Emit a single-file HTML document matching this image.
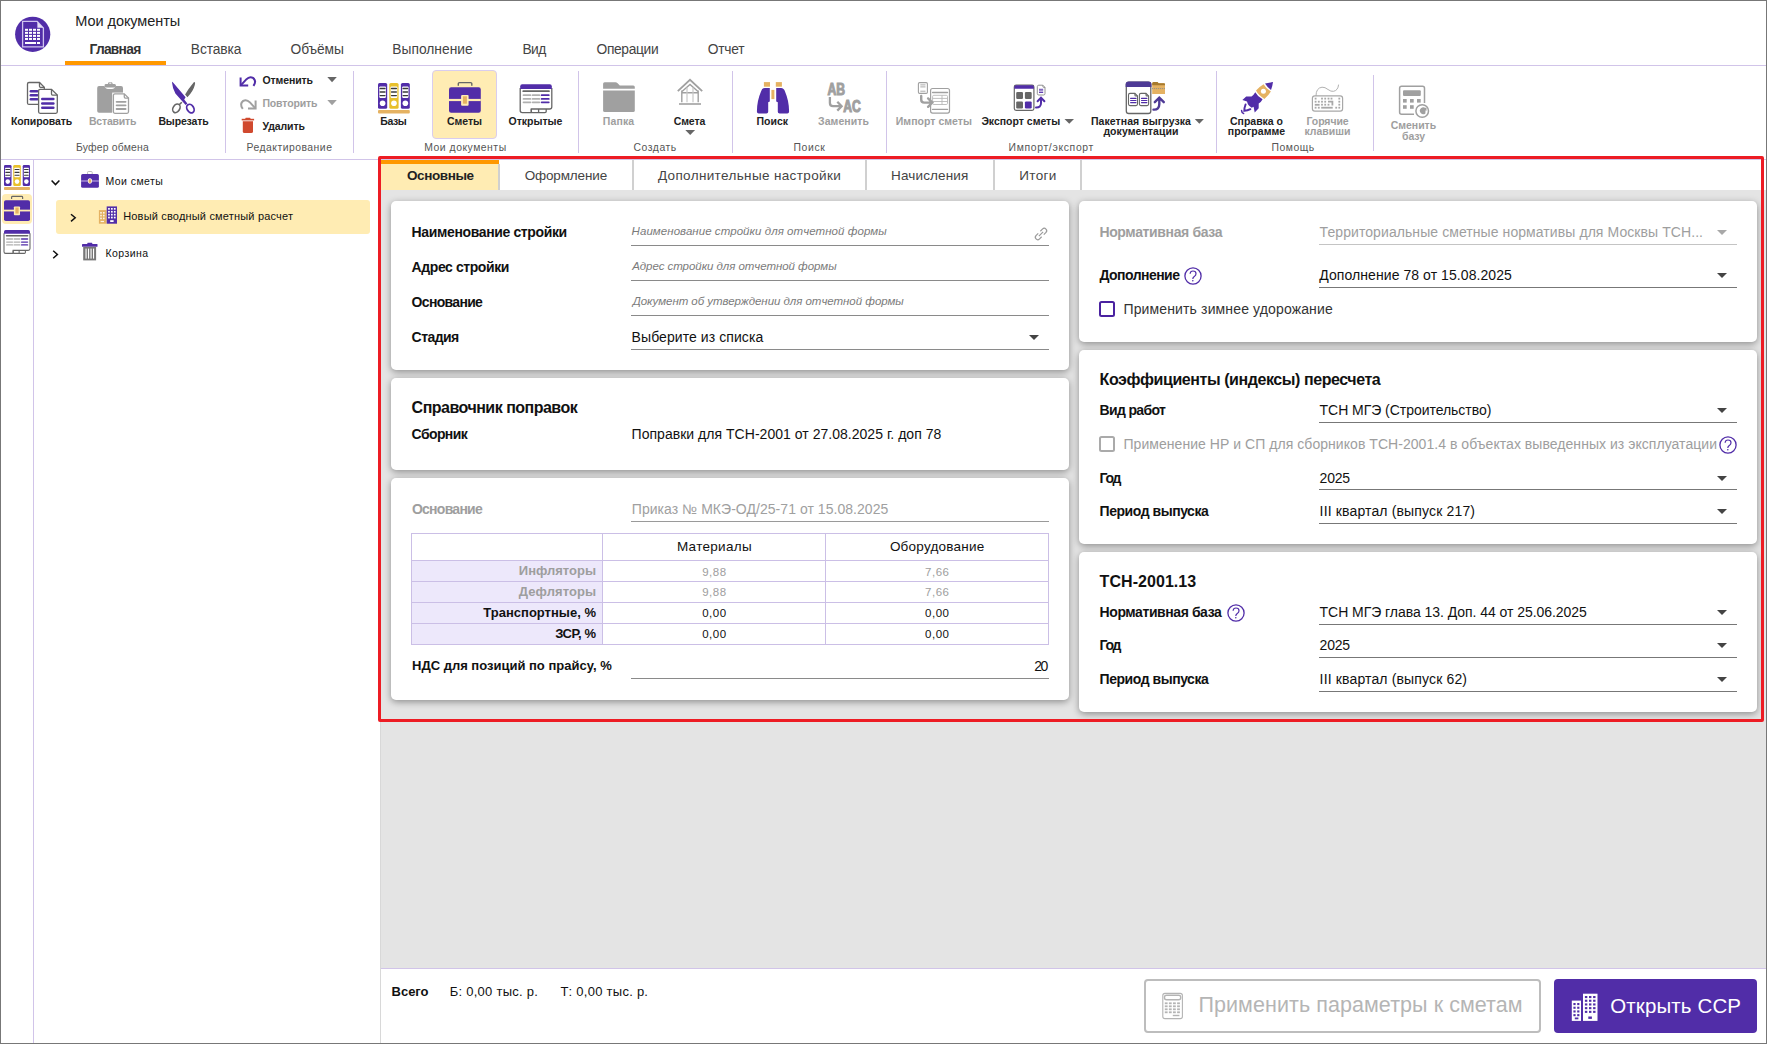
<!DOCTYPE html>
<html><head><meta charset="utf-8"><style>
html,body{margin:0;padding:0;}
body{width:1767px;height:1044px;overflow:hidden;position:relative;background:#fff;font-family:"Liberation Sans",sans-serif;}
.t{position:absolute;white-space:nowrap;line-height:1;}
svg{display:block;overflow:visible}
</style></head><body>
<div style="position:absolute;left:381px;top:160px;width:1385px;height:808px;background:#e4e4e4"></div><div class="t" style="left:75.30px;top:13.83px;font-size:14.5px;font-weight:400;color:#222;letter-spacing:-0.062px;">Мои документы</div><div class="t" style="left:89.50px;top:42.72px;font-size:13.8px;font-weight:700;color:#333;letter-spacing:-0.733px;">Главная</div><div class="t" style="left:190.80px;top:42.72px;font-size:13.8px;font-weight:400;color:#444;letter-spacing:-0.100px;">Вставка</div><div class="t" style="left:290.60px;top:42.72px;font-size:13.8px;font-weight:400;color:#444;letter-spacing:-0.120px;">Объёмы</div><div class="t" style="left:392.30px;top:42.72px;font-size:13.8px;font-weight:400;color:#444;letter-spacing:0.011px;">Выполнение</div><div class="t" style="left:522.50px;top:42.72px;font-size:13.8px;font-weight:400;color:#444;letter-spacing:-0.625px;">Вид</div><div class="t" style="left:596.50px;top:42.72px;font-size:13.8px;font-weight:400;color:#444;letter-spacing:-0.336px;">Операции</div><div class="t" style="left:707.80px;top:42.72px;font-size:13.8px;font-weight:400;color:#444;letter-spacing:-0.250px;">Отчет</div><div style="position:absolute;left:65px;top:61px;width:101px;height:4px;background:#ff9800"></div><div style="position:absolute;left:1px;top:65px;width:1765px;height:1px;background:#d1c4e9"></div><div style="position:absolute;left:1px;top:159px;width:1765px;height:1px;background:#d1c4e9"></div><div style="position:absolute;left:225px;top:71px;width:1px;height:82px;background:#d1c4e9"></div><div style="position:absolute;left:353px;top:71px;width:1px;height:82px;background:#d1c4e9"></div><div style="position:absolute;left:578px;top:71px;width:1px;height:82px;background:#d1c4e9"></div><div style="position:absolute;left:732px;top:71px;width:1px;height:82px;background:#d1c4e9"></div><div style="position:absolute;left:886px;top:71px;width:1px;height:82px;background:#d1c4e9"></div><div style="position:absolute;left:1216px;top:71px;width:1px;height:82px;background:#d1c4e9"></div><div style="position:absolute;left:1373px;top:75px;width:1px;height:76px;background:#d1c4e9"></div><div style="position:absolute;left:432px;top:70px;width:65px;height:69px;background:#ffecb3;border:1px solid #d9cdee;border-radius:4px;box-sizing:border-box"></div><div class="t" style="left:11.00px;top:115.81px;font-size:10.5px;font-weight:700;color:#222;letter-spacing:-0.111px;">Копировать</div><div class="t" style="left:89.00px;top:115.81px;font-size:10.5px;font-weight:700;color:#9e9e9e;letter-spacing:-0.214px;">Вставить</div><div class="t" style="left:158.40px;top:115.81px;font-size:10.5px;font-weight:700;color:#222;letter-spacing:-0.157px;">Вырезать</div><div class="t" style="left:262.40px;top:75.21px;font-size:10.5px;font-weight:700;color:#222;letter-spacing:-0.100px;">Отменить</div><div class="t" style="left:262.40px;top:98.31px;font-size:10.5px;font-weight:700;color:#9e9e9e;letter-spacing:-0.131px;">Повторить</div><div class="t" style="left:262.40px;top:120.71px;font-size:10.5px;font-weight:700;color:#222;letter-spacing:-0.083px;">Удалить</div><div class="t" style="left:380.30px;top:115.51px;font-size:10.5px;font-weight:700;color:#222;letter-spacing:-0.400px;">Базы</div><div class="t" style="left:447.00px;top:115.51px;font-size:10.5px;font-weight:700;color:#222;letter-spacing:-0.037px;">Сметы</div><div class="t" style="left:508.60px;top:115.51px;font-size:10.5px;font-weight:700;color:#222;letter-spacing:-0.029px;">Открытые</div><div class="t" style="left:602.70px;top:115.51px;font-size:10.5px;font-weight:700;color:#9e9e9e;letter-spacing:0.162px;">Папка</div><div class="t" style="left:673.70px;top:115.51px;font-size:10.5px;font-weight:700;color:#222;letter-spacing:-0.088px;">Смета</div><div class="t" style="left:756.50px;top:115.51px;font-size:10.5px;font-weight:700;color:#222;letter-spacing:-0.013px;">Поиск</div><div class="t" style="left:818.00px;top:115.51px;font-size:10.5px;font-weight:700;color:#9e9e9e;letter-spacing:0.086px;">Заменить</div><div class="t" style="left:895.80px;top:115.51px;font-size:10.5px;font-weight:700;color:#9e9e9e;letter-spacing:0.027px;">Импорт сметы</div><div class="t" style="left:981.40px;top:115.51px;font-size:10.5px;font-weight:700;color:#222;letter-spacing:-0.012px;">Экспорт сметы</div><div class="t" style="left:1090.90px;top:115.51px;font-size:10.5px;font-weight:700;color:#222;letter-spacing:0.075px;">Пакетная выгрузка</div><div class="t" style="left:1103.40px;top:126.41px;font-size:10.5px;font-weight:700;color:#222;letter-spacing:0.068px;">документации</div><div class="t" style="left:1230.00px;top:115.51px;font-size:10.5px;font-weight:700;color:#222;letter-spacing:-0.006px;">Справка о</div><div class="t" style="left:1227.80px;top:126.41px;font-size:10.5px;font-weight:700;color:#222;letter-spacing:0.006px;">программе</div><div class="t" style="left:1306.50px;top:115.51px;font-size:10.5px;font-weight:700;color:#9e9e9e;letter-spacing:-0.092px;">Горячие</div><div class="t" style="left:1304.40px;top:126.41px;font-size:10.5px;font-weight:700;color:#9e9e9e;">клавиши</div><div class="t" style="left:1390.70px;top:120.11px;font-size:10.5px;font-weight:700;color:#9e9e9e;letter-spacing:-0.017px;">Сменить</div><div class="t" style="left:1402.00px;top:130.51px;font-size:10.5px;font-weight:700;color:#9e9e9e;letter-spacing:-0.083px;">базу</div><div class="t" style="left:76.00px;top:142.50px;font-size:10.4px;font-weight:400;color:#555;letter-spacing:0.191px;">Буфер обмена</div><div class="t" style="left:246.50px;top:142.50px;font-size:10.4px;font-weight:400;color:#555;letter-spacing:0.481px;">Редактирование</div><div class="t" style="left:424.30px;top:142.50px;font-size:10.4px;font-weight:400;color:#555;letter-spacing:0.508px;">Мои документы</div><div class="t" style="left:633.50px;top:142.50px;font-size:10.4px;font-weight:400;color:#555;letter-spacing:0.542px;">Создать</div><div class="t" style="left:793.50px;top:142.50px;font-size:10.4px;font-weight:400;color:#555;letter-spacing:0.650px;">Поиск</div><div class="t" style="left:1008.50px;top:142.50px;font-size:10.4px;font-weight:400;color:#555;letter-spacing:0.673px;">Импорт/экспорт</div><div class="t" style="left:1271.50px;top:142.50px;font-size:10.4px;font-weight:400;color:#555;letter-spacing:0.530px;">Помощь</div><div style="position:absolute;left:33px;top:160px;width:1px;height:883px;background:#d1c4e9"></div><div style="position:absolute;left:380px;top:160px;width:1px;height:883px;background:#d8d8d8"></div><div style="position:absolute;left:2px;top:194px;width:30px;height:30px;background:#ffecb3;border-radius:4px"></div><div style="position:absolute;left:56px;top:200px;width:314px;height:34px;background:#ffecb3;border-radius:3px"></div><div class="t" style="left:105.40px;top:176.31px;font-size:10.5px;font-weight:400;color:#111;letter-spacing:0.450px;">Мои сметы</div><div class="t" style="left:123.20px;top:211.29px;font-size:11px;font-weight:400;color:#111;letter-spacing:0.181px;">Новый сводный сметный расчет</div><div class="t" style="left:105.40px;top:248.21px;font-size:10.5px;font-weight:400;color:#111;letter-spacing:0.450px;">Корзина</div><div style="position:absolute;left:381px;top:160px;width:1385px;height:30px;background:#fff"></div><div style="position:absolute;left:381px;top:160px;width:117px;height:30px;background:#ffecb3"></div><div style="position:absolute;left:381px;top:160px;width:118px;height:4px;background:#ff9800"></div><div style="position:absolute;left:498px;top:164px;width:2px;height:26px;background:#d0d0d0"></div><div style="position:absolute;left:632px;top:160px;width:2px;height:30px;background:#d0d0d0"></div><div style="position:absolute;left:865px;top:160px;width:2px;height:30px;background:#d0d0d0"></div><div style="position:absolute;left:993px;top:160px;width:2px;height:30px;background:#d0d0d0"></div><div style="position:absolute;left:1080px;top:160px;width:2px;height:30px;background:#d0d0d0"></div><div class="t" style="left:406.90px;top:168.97px;font-size:13.5px;font-weight:700;color:#222;letter-spacing:-0.386px;">Основные</div><div class="t" style="left:524.70px;top:168.97px;font-size:13.5px;font-weight:400;color:#444;letter-spacing:-0.144px;">Оформление</div><div class="t" style="left:657.90px;top:168.97px;font-size:13.5px;font-weight:400;color:#444;letter-spacing:0.361px;">Дополнительные настройки</div><div class="t" style="left:891.00px;top:168.97px;font-size:13.5px;font-weight:400;color:#444;letter-spacing:0.156px;">Начисления</div><div class="t" style="left:1019.30px;top:168.97px;font-size:13.5px;font-weight:400;color:#444;letter-spacing:0.350px;">Итоги</div><div style="position:absolute;left:391px;top:201px;width:678px;height:169px;box-shadow:0 2px 7px rgba(0,0,0,0.38);border-radius:5px;background:#fff"></div><div style="position:absolute;left:391px;top:378px;width:678px;height:92px;box-shadow:0 2px 7px rgba(0,0,0,0.38);border-radius:5px;background:#fff"></div><div style="position:absolute;left:391px;top:478px;width:678px;height:222px;box-shadow:0 2px 7px rgba(0,0,0,0.38);border-radius:5px;background:#fff"></div><div style="position:absolute;left:1079px;top:201px;width:678px;height:141px;box-shadow:0 2px 7px rgba(0,0,0,0.38);border-radius:5px;background:#fff"></div><div style="position:absolute;left:1079px;top:350px;width:678px;height:194px;box-shadow:0 2px 7px rgba(0,0,0,0.38);border-radius:5px;background:#fff"></div><div style="position:absolute;left:1079px;top:552px;width:678px;height:160px;box-shadow:0 2px 7px rgba(0,0,0,0.38);border-radius:5px;background:#fff"></div><div class="t" style="left:411.60px;top:225.15px;font-size:14px;font-weight:700;color:#111;letter-spacing:-0.366px;">Наименование стройки</div><div class="t" style="left:631.60px;top:226.27px;font-size:11.5px;font-weight:400;color:#7b7b7b;font-style:italic;letter-spacing:0.055px;">Наименование стройки для отчетной формы</div><div style="position:absolute;left:631px;top:245px;width:418px;height:1px;background:#8a8a8a"></div><div class="t" style="left:411.60px;top:259.95px;font-size:14px;font-weight:700;color:#111;letter-spacing:-0.417px;">Адрес стройки</div><div class="t" style="left:632.20px;top:261.27px;font-size:11.5px;font-weight:400;color:#7b7b7b;font-style:italic;letter-spacing:-0.053px;">Адрес стройки для отчетной формы</div><div style="position:absolute;left:631px;top:280px;width:418px;height:1px;background:#8a8a8a"></div><div class="t" style="left:411.60px;top:294.75px;font-size:14px;font-weight:700;color:#111;letter-spacing:-0.681px;">Основание</div><div class="t" style="left:632.70px;top:296.27px;font-size:11.5px;font-weight:400;color:#7b7b7b;font-style:italic;letter-spacing:-0.043px;">Документ об утверждении для отчетной формы</div><div style="position:absolute;left:631px;top:315px;width:418px;height:1px;background:#8a8a8a"></div><div class="t" style="left:411.60px;top:329.75px;font-size:14px;font-weight:700;color:#111;letter-spacing:-0.560px;">Стадия</div><div class="t" style="left:631.60px;top:329.75px;font-size:14px;font-weight:400;color:#111;letter-spacing:0.074px;">Выберите из списка</div><div style="position:absolute;left:631px;top:349px;width:418px;height:1px;background:#8a8a8a"></div><svg style="position:absolute;left:1029.3px;top:334.6px" width="10" height="5" viewBox="0 0 10 5"><path d="M0 0H10L5.0 5Z" fill="#444"/></svg><div class="t" style="left:411.60px;top:399.66px;font-size:16px;font-weight:700;color:#111;letter-spacing:-0.508px;">Справочник поправок</div><div class="t" style="left:411.60px;top:427.45px;font-size:14px;font-weight:700;color:#111;letter-spacing:-0.600px;">Сборник</div><div class="t" style="left:631.60px;top:427.45px;font-size:14px;font-weight:400;color:#111;letter-spacing:0.028px;">Поправки для ТСН-2001 от 27.08.2025 г. доп 78</div><div class="t" style="left:411.90px;top:502.15px;font-size:14px;font-weight:700;color:#9e9e9e;letter-spacing:-0.731px;">Основание</div><div class="t" style="left:631.80px;top:502.15px;font-size:14px;font-weight:400;color:#a0a0a0;letter-spacing:0.044px;">Приказ № МКЭ-ОД/25-71 от 15.08.2025</div><div style="position:absolute;left:631px;top:521px;width:418px;height:1px;background:#9a9a9a"></div><div style="position:absolute;left:411px;top:533px;width:638px;height:112px;border:1px solid #cbbfe6;box-sizing:border-box"></div><div style="position:absolute;left:412px;top:561px;width:190px;height:83px;background:#ede8fb"></div><div style="position:absolute;left:411px;top:560px;width:638px;height:1px;background:#cbbfe6"></div><div style="position:absolute;left:411px;top:581px;width:638px;height:1px;background:#cbbfe6"></div><div style="position:absolute;left:411px;top:602px;width:638px;height:1px;background:#cbbfe6"></div><div style="position:absolute;left:411px;top:623px;width:638px;height:1px;background:#cbbfe6"></div><div style="position:absolute;left:602px;top:533px;width:1px;height:112px;background:#cbbfe6"></div><div style="position:absolute;left:825px;top:533px;width:1px;height:112px;background:#cbbfe6"></div><div class="t" style="left:676.90px;top:539.67px;font-size:13.5px;font-weight:400;color:#111;letter-spacing:0.313px;">Материалы</div><div class="t" style="left:889.90px;top:539.67px;font-size:13.5px;font-weight:400;color:#111;letter-spacing:0.227px;">Оборудование</div><div class="t" style="left:518.80px;top:563.60px;font-size:13px;font-weight:700;color:#9e9e9e;letter-spacing:-0.006px;">Инфляторы</div><div class="t" style="left:702.20px;top:566.57px;font-size:11.5px;font-weight:400;color:#9e9e9e;letter-spacing:0.533px;">9,88</div><div class="t" style="left:925.10px;top:566.57px;font-size:11.5px;font-weight:400;color:#9e9e9e;letter-spacing:0.500px;">7,66</div><div class="t" style="left:518.80px;top:584.60px;font-size:13px;font-weight:700;color:#9e9e9e;letter-spacing:0.063px;">Дефляторы</div><div class="t" style="left:702.20px;top:587.47px;font-size:11.5px;font-weight:400;color:#9e9e9e;letter-spacing:0.533px;">9,88</div><div class="t" style="left:925.10px;top:587.47px;font-size:11.5px;font-weight:400;color:#9e9e9e;letter-spacing:0.500px;">7,66</div><div class="t" style="left:483.30px;top:605.60px;font-size:13px;font-weight:700;color:#111;letter-spacing:0.007px;">Транспортные, %</div><div class="t" style="left:702.20px;top:608.47px;font-size:11.5px;font-weight:400;color:#111;letter-spacing:0.533px;">0,00</div><div class="t" style="left:925.10px;top:608.47px;font-size:11.5px;font-weight:400;color:#111;letter-spacing:0.500px;">0,00</div><div class="t" style="left:555.20px;top:626.60px;font-size:13px;font-weight:700;color:#111;letter-spacing:-0.410px;">ЗСР, %</div><div class="t" style="left:702.20px;top:629.17px;font-size:11.5px;font-weight:400;color:#111;letter-spacing:0.533px;">0,00</div><div class="t" style="left:925.10px;top:629.17px;font-size:11.5px;font-weight:400;color:#111;letter-spacing:0.500px;">0,00</div><div class="t" style="left:412.00px;top:659.20px;font-size:13px;font-weight:700;color:#111;">НДС для позиций по прайсу, %</div><div class="t" style="left:1034.20px;top:658.95px;font-size:14px;font-weight:400;color:#111;letter-spacing:-1.350px;">20</div><div style="position:absolute;left:631px;top:678px;width:418px;height:1px;background:#8a8a8a"></div><div class="t" style="left:1099.40px;top:225.35px;font-size:14px;font-weight:700;color:#9e9e9e;letter-spacing:-0.363px;">Нормативная база</div><div class="t" style="left:1319.60px;top:225.35px;font-size:14px;font-weight:400;color:#9e9e9e;letter-spacing:0.077px;">Территориальные сметные нормативы для Москвы ТСН...</div><svg style="position:absolute;left:1717.3px;top:229.5px" width="10" height="5" viewBox="0 0 10 5"><path d="M0 0H10L5.0 5Z" fill="#a8a8a8"/></svg><div style="position:absolute;left:1319px;top:244px;width:418px;height:1px;background:#c4c4c4"></div><div class="t" style="left:1099.40px;top:267.95px;font-size:14px;font-weight:700;color:#111;letter-spacing:-0.528px;">Дополнение</div><div class="t" style="left:1319.30px;top:267.95px;font-size:14px;font-weight:400;color:#111;letter-spacing:0.069px;">Дополнение 78 от 15.08.2025</div><svg style="position:absolute;left:1717.3px;top:273px" width="10" height="5" viewBox="0 0 10 5"><path d="M0 0H10L5.0 5Z" fill="#444"/></svg><div style="position:absolute;left:1319px;top:287px;width:418px;height:1px;background:#777"></div><div style="position:absolute;left:1099px;top:300.8px;width:16px;height:16px;border:2px solid #4a22a0;box-sizing:border-box;border-radius:2.5px"></div><div class="t" style="left:1123.50px;top:302.15px;font-size:14px;font-weight:400;color:#333;letter-spacing:0.135px;">Применить зимнее удорожание</div><div class="t" style="left:1099.60px;top:371.76px;font-size:16px;font-weight:700;color:#111;letter-spacing:-0.429px;">Коэффициенты (индексы) пересчета</div><div class="t" style="left:1099.60px;top:403.15px;font-size:14px;font-weight:700;color:#111;letter-spacing:-0.656px;">Вид работ</div><div class="t" style="left:1319.60px;top:403.15px;font-size:14px;font-weight:400;color:#111;letter-spacing:-0.041px;">ТСН МГЭ (Строительство)</div><svg style="position:absolute;left:1717.3px;top:408px" width="10" height="5" viewBox="0 0 10 5"><path d="M0 0H10L5.0 5Z" fill="#444"/></svg><div style="position:absolute;left:1319px;top:422px;width:418px;height:1px;background:#777"></div><div style="position:absolute;left:1099px;top:435.9px;width:16px;height:16px;border:2px solid #aaaaaa;box-sizing:border-box;border-radius:2.5px"></div><div class="t" style="left:1123.50px;top:436.95px;font-size:14px;font-weight:400;color:#9e9e9e;letter-spacing:0.046px;">Применение НР и СП для сборников ТСН-2001.4 в объектах выведенных из эксплуатации</div><div class="t" style="left:1099.60px;top:470.95px;font-size:14px;font-weight:700;color:#111;letter-spacing:-1.400px;">Год</div><div class="t" style="left:1319.60px;top:470.95px;font-size:14px;font-weight:400;color:#111;letter-spacing:-0.217px;">2025</div><svg style="position:absolute;left:1717.3px;top:476px" width="10" height="5" viewBox="0 0 10 5"><path d="M0 0H10L5.0 5Z" fill="#444"/></svg><div style="position:absolute;left:1319px;top:489px;width:418px;height:1px;background:#777"></div><div class="t" style="left:1099.60px;top:503.65px;font-size:14px;font-weight:700;color:#111;letter-spacing:-0.462px;">Период выпуска</div><div class="t" style="left:1319.60px;top:503.65px;font-size:14px;font-weight:400;color:#111;letter-spacing:0.150px;">III квартал (выпуск 217)</div><svg style="position:absolute;left:1717.3px;top:509.2px" width="10" height="5" viewBox="0 0 10 5"><path d="M0 0H10L5.0 5Z" fill="#444"/></svg><div style="position:absolute;left:1319px;top:523px;width:418px;height:1px;background:#777"></div><div class="t" style="left:1099.60px;top:573.76px;font-size:16px;font-weight:700;color:#111;letter-spacing:0.055px;">ТСН-2001.13</div><div class="t" style="left:1099.60px;top:605.15px;font-size:14px;font-weight:700;color:#111;letter-spacing:-0.423px;">Нормативная база</div><div class="t" style="left:1319.60px;top:605.15px;font-size:14px;font-weight:400;color:#111;letter-spacing:-0.047px;">ТСН МГЭ глава 13. Доп. 44 от 25.06.2025</div><svg style="position:absolute;left:1717.3px;top:610px" width="10" height="5" viewBox="0 0 10 5"><path d="M0 0H10L5.0 5Z" fill="#444"/></svg><div style="position:absolute;left:1319px;top:624px;width:418px;height:1px;background:#777"></div><div class="t" style="left:1099.60px;top:637.85px;font-size:14px;font-weight:700;color:#111;letter-spacing:-1.400px;">Год</div><div class="t" style="left:1319.60px;top:637.85px;font-size:14px;font-weight:400;color:#111;letter-spacing:-0.217px;">2025</div><svg style="position:absolute;left:1717.3px;top:642.5px" width="10" height="5" viewBox="0 0 10 5"><path d="M0 0H10L5.0 5Z" fill="#444"/></svg><div style="position:absolute;left:1319px;top:657px;width:418px;height:1px;background:#777"></div><div class="t" style="left:1099.60px;top:672.15px;font-size:14px;font-weight:700;color:#111;letter-spacing:-0.462px;">Период выпуска</div><div class="t" style="left:1319.60px;top:672.15px;font-size:14px;font-weight:400;color:#111;letter-spacing:0.148px;">III квартал (выпуск 62)</div><svg style="position:absolute;left:1717.3px;top:677px" width="10" height="5" viewBox="0 0 10 5"><path d="M0 0H10L5.0 5Z" fill="#444"/></svg><div style="position:absolute;left:1319px;top:691px;width:418px;height:1px;background:#777"></div><svg style="position:absolute;left:1184px;top:267px" width="18" height="18" viewBox="0 0 18 18"><circle cx="9" cy="9" r="8.1" fill="none" stroke="#512da8" stroke-width="1.3"/><path d="M6.1 6.8Q6.3 4 9 4Q12 4 12 6.7Q12 8.4 10.3 9.4Q8.8 10.3 8.8 12.1" fill="none" stroke="#512da8" stroke-width="1.2"/><circle cx="8.8" cy="13.7" r="0.8" fill="#512da8"/></svg><svg style="position:absolute;left:1719px;top:435.8px" width="18" height="18" viewBox="0 0 18 18"><circle cx="9" cy="9" r="8.1" fill="none" stroke="#512da8" stroke-width="1.3"/><path d="M6.1 6.8Q6.3 4 9 4Q12 4 12 6.7Q12 8.4 10.3 9.4Q8.8 10.3 8.8 12.1" fill="none" stroke="#512da8" stroke-width="1.2"/><circle cx="8.8" cy="13.7" r="0.8" fill="#512da8"/></svg><svg style="position:absolute;left:1227px;top:604px" width="18" height="18" viewBox="0 0 18 18"><circle cx="9" cy="9" r="8.1" fill="none" stroke="#512da8" stroke-width="1.3"/><path d="M6.1 6.8Q6.3 4 9 4Q12 4 12 6.7Q12 8.4 10.3 9.4Q8.8 10.3 8.8 12.1" fill="none" stroke="#512da8" stroke-width="1.2"/><circle cx="8.8" cy="13.7" r="0.8" fill="#512da8"/></svg><div style="position:absolute;left:378px;top:156px;width:1386px;height:566px;border:3px solid #ed1c24;box-sizing:border-box;border-radius:2px"></div><div style="position:absolute;left:381px;top:968px;width:1385px;height:75px;background:#fff"></div><div style="position:absolute;left:381px;top:968px;width:1385px;height:1px;background:#d1c4e9"></div><div class="t" style="left:391.60px;top:984.70px;font-size:13px;font-weight:700;color:#111;letter-spacing:-0.037px;">Всего</div><div class="t" style="left:449.70px;top:984.70px;font-size:13px;font-weight:400;color:#111;letter-spacing:0.268px;">Б: 0,00 тыс. р.</div><div class="t" style="left:560.40px;top:984.70px;font-size:13px;font-weight:400;color:#111;letter-spacing:0.261px;">Т: 0,00 тыс. р.</div><div style="position:absolute;left:1144px;top:979px;width:397px;height:54px;border:2px solid #bdbdbd;box-sizing:border-box;border-radius:4px;background:#fff"></div><div class="t" style="left:1198.50px;top:994.90px;font-size:21.5px;font-weight:400;color:#b5b5b5;letter-spacing:0.065px;">Применить параметры к сметам</div><div style="position:absolute;left:1554px;top:979px;width:203px;height:54px;background:#512da8;border-radius:4px"></div><div class="t" style="left:1610.30px;top:995.65px;font-size:20.5px;font-weight:400;color:#fff;letter-spacing:0.120px;">Открыть ССР</div><div style="position:absolute;left:0px;top:0px;width:1767px;height:1px;background:#777"></div><div style="position:absolute;left:0px;top:1043px;width:1767px;height:1px;background:#777"></div><div style="position:absolute;left:0px;top:0px;width:1px;height:1044px;background:#777"></div><div style="position:absolute;left:1766px;top:0px;width:1px;height:1044px;background:#777"></div><svg style="position:absolute;left:0;top:0" width="1767" height="1044" viewBox="0 0 1767 1044"><circle cx="32.7" cy="34.3" r="17.6" fill="#512da8"/><path d="M22.6 21.4H37.199999999999996L43.4 28.0V46.9H22.6Z" fill="none" stroke="#cfc3ee" stroke-width="1.3"/><path d="M37.4 21.799999999999997V27.799999999999997H43.1Z" fill="#e6dff7"/><rect x="25.0" y="28.8" width="3.0" height="2.0" fill="#fff"/><rect x="29.0" y="28.8" width="3.0" height="2.0" fill="#fff"/><rect x="33.0" y="28.8" width="3.0" height="2.0" fill="#fff"/><rect x="37.0" y="28.8" width="3.0" height="2.0" fill="#fff"/><rect x="25.0" y="31.85" width="3.0" height="2.0" fill="#fff"/><rect x="29.0" y="31.85" width="3.0" height="2.0" fill="#fff"/><rect x="33.0" y="31.85" width="3.0" height="2.0" fill="#fff"/><rect x="37.0" y="31.85" width="3.0" height="2.0" fill="#fff"/><rect x="25.0" y="34.9" width="3.0" height="2.0" fill="#fff"/><rect x="29.0" y="34.9" width="3.0" height="2.0" fill="#fff"/><rect x="33.0" y="34.9" width="3.0" height="2.0" fill="#fff"/><rect x="37.0" y="34.9" width="3.0" height="2.0" fill="#fff"/><rect x="25.0" y="37.95" width="3.0" height="2.0" fill="#fff"/><rect x="29.0" y="37.95" width="3.0" height="2.0" fill="#fff"/><rect x="33.0" y="37.95" width="3.0" height="2.0" fill="#fff"/><rect x="37.0" y="37.95" width="3.0" height="2.0" fill="#fff"/><rect x="25.0" y="42.0" width="11.0" height="2.0" fill="#fff"/><rect x="37.0" y="42.0" width="3.0" height="2.0" fill="#fff"/><path d="M29.0 82.5H39.5L44.3 87.3V102.9Q44.3 104.4 42.8 104.4H29.0Q27.5 104.4 27.5 102.9V84.0Q27.5 82.5 29.0 82.5Z" fill="#fff" stroke="#666666" stroke-width="1.3"/><path d="M39.5 82.5V86.3Q39.5 87.3 40.5 87.3H44.3" fill="none" stroke="#666666" stroke-width="1.3"/><line x1="30.8" y1="91.3" x2="37.2" y2="91.3" stroke="#512da8" stroke-width="2.4" stroke-linecap="round"/><line x1="30.8" y1="95.3" x2="37.2" y2="95.3" stroke="#512da8" stroke-width="2.4" stroke-linecap="round"/><line x1="30.8" y1="99.2" x2="37.2" y2="99.2" stroke="#512da8" stroke-width="2.4" stroke-linecap="round"/><path d="M40.1 89.3H51.5L57.3 95.1V111.8Q57.3 113.3 55.8 113.3H40.1Q38.6 113.3 38.6 111.8V90.8Q38.6 89.3 40.1 89.3Z" fill="#fff" stroke="#666666" stroke-width="1.3"/><path d="M51.5 89.3V94.1Q51.5 95.1 52.5 95.1H57.3" fill="none" stroke="#666666" stroke-width="1.3"/><line x1="42.2" y1="99.0" x2="53.4" y2="99.0" stroke="#512da8" stroke-width="2.4" stroke-linecap="round"/><line x1="42.2" y1="103.5" x2="53.4" y2="103.5" stroke="#512da8" stroke-width="2.4" stroke-linecap="round"/><line x1="42.2" y1="107.8" x2="53.4" y2="107.8" stroke="#512da8" stroke-width="2.4" stroke-linecap="round"/><path d="M99 86H104.5Q105.5 89 108 89H112Q114.5 89 115.5 86H121Q123 86 123 88V112.8H99Q97.2 112.8 97.2 111V88Q97.2 86 99 86Z" fill="#a0a0a0"/><path d="M104.6 85Q104.6 84 106 84H107.8L108.6 82.2H112L112.8 84H114.5Q116 84 116 85.5Q116 87.6 114 87.6H106.5Q104.6 87.6 104.6 86Z" fill="#a0a0a0"/><rect x="109.3" y="82.8" width="2" height="0.9" fill="#fff"/><rect x="112.2" y="92.6" width="18" height="22" fill="#fff"/><path d="M114.9 93.9H124.3L128.5 98.10000000000001V111.8Q128.5 113.3 127.0 113.3H114.9Q113.4 113.3 113.4 111.8V95.4Q113.4 93.9 114.9 93.9Z" fill="#fff" stroke="#a0a0a0" stroke-width="1.3"/><path d="M124.3 93.9V97.10000000000001Q124.3 98.10000000000001 125.3 98.10000000000001H128.5" fill="none" stroke="#a0a0a0" stroke-width="1.3"/><line x1="116.6" y1="101.8" x2="125.6" y2="101.8" stroke="#a0a0a0" stroke-width="1.8" stroke-linecap="round"/><line x1="116.6" y1="105.3" x2="125.6" y2="105.3" stroke="#a0a0a0" stroke-width="1.8" stroke-linecap="round"/><line x1="116.6" y1="109.0" x2="125.6" y2="109.0" stroke="#a0a0a0" stroke-width="1.8" stroke-linecap="round"/><path d="M172.4 81.8L185.6 97.3L184.2 99.6L187.4 103.6L185.6 104.9L181.6 100.4L175.4 93.4Q172.4 88 172.1 83Q172.1 81.8 172.4 81.8Z" fill="#512da8"/><ellipse cx="190.4" cy="108.6" rx="3.3" ry="4.6" transform="rotate(-32 190.4 108.6)" fill="none" stroke="#512da8" stroke-width="1.8"/><path d="M194.6 81.9Q195.6 82.4 194.8 85Q193.4 91 187.4 97.3L185.1 94.6Q188.5 88.5 193.8 82.2Z" fill="#666666"/><ellipse cx="176.4" cy="108.3" rx="3.3" ry="4.6" transform="rotate(32 176.4 108.3)" fill="none" stroke="#666666" stroke-width="1.6"/><line x1="179.2" y1="104.8" x2="181.8" y2="102.2" stroke="#666666" stroke-width="1.6"/><path d="M240.6 77.6V85.6H248.2" fill="none" stroke="#512da8" stroke-width="2"/><path d="M241 85.2L246.3 79.4Q249.6 75.9 253 77.9Q257 81 253.4 85.9" fill="none" stroke="#512da8" stroke-width="2"/><path d="M255.6 100.6V108.6H248" fill="none" stroke="#a0a0a0" stroke-width="2"/><path d="M255.2 108.2L249.9 102.4Q246.6 98.9 243.2 100.9Q239.2 104 242.8 108.9" fill="none" stroke="#a0a0a0" stroke-width="2"/><rect x="241.7" y="118.8" width="12.4" height="1.6" fill="#d0492e"/><rect x="245.3" y="117.8" width="5.2" height="1.4" rx="0.6" fill="#d0492e"/><path d="M242.8 121.2H253V131.4Q253 133.1 251.3 133.1H244.5Q242.8 133.1 242.8 131.4Z" fill="#d0492e"/><rect x="378.0" y="83.0" width="9.199999999999989" height="25.8" rx="1.6" fill="#512da8"/><rect x="379.3" y="86.4" width="6.599999999999989" height="11.5" rx="0.8" fill="#fff"/><line x1="380.2" y1="88.5" x2="385.0" y2="88.5" stroke="#3a3a3a" stroke-width="1.3" stroke-linecap="round"/><line x1="380.2" y1="92.0" x2="385.0" y2="92.0" stroke="#3a3a3a" stroke-width="1.3" stroke-linecap="round"/><line x1="380.2" y1="95.6" x2="385.0" y2="95.6" stroke="#3a3a3a" stroke-width="1.3" stroke-linecap="round"/><circle cx="382.6" cy="103.3" r="2.8" fill="#fff"/><rect x="389.3" y="83.0" width="9.300000000000011" height="25.8" rx="1.6" fill="#e8c02c"/><rect x="390.6" y="86.4" width="6.700000000000012" height="11.5" rx="0.8" fill="#fff"/><line x1="391.5" y1="88.5" x2="396.40000000000003" y2="88.5" stroke="#3a3a3a" stroke-width="1.3" stroke-linecap="round"/><line x1="391.5" y1="92.0" x2="396.40000000000003" y2="92.0" stroke="#3a3a3a" stroke-width="1.3" stroke-linecap="round"/><line x1="391.5" y1="95.6" x2="396.40000000000003" y2="95.6" stroke="#3a3a3a" stroke-width="1.3" stroke-linecap="round"/><circle cx="393.95000000000005" cy="103.3" r="2.8" fill="#fff"/><rect x="400.9" y="83.0" width="8.900000000000034" height="25.8" rx="1.6" fill="#512da8"/><rect x="402.2" y="86.4" width="6.3000000000000345" height="11.5" rx="0.8" fill="#fff"/><line x1="403.09999999999997" y1="88.5" x2="407.6" y2="88.5" stroke="#3a3a3a" stroke-width="1.3" stroke-linecap="round"/><line x1="403.09999999999997" y1="92.0" x2="407.6" y2="92.0" stroke="#3a3a3a" stroke-width="1.3" stroke-linecap="round"/><line x1="403.09999999999997" y1="95.6" x2="407.6" y2="95.6" stroke="#3a3a3a" stroke-width="1.3" stroke-linecap="round"/><circle cx="405.35" cy="103.3" r="2.8" fill="#fff"/><rect x="378.0" y="110.0" width="31.8" height="3.6" rx="1.0" fill="#e5b262"/><path d="M458.3 85.8V83.6Q458.3 82.6 459.5 82.6H470.6Q471.8 82.6 471.8 83.6V85.8" fill="none" stroke="#666666" stroke-width="1.4"/><rect x="449.0" y="87.3" width="31.8" height="25.4" rx="2.2" fill="#512da8"/><rect x="449.0" y="98.9" width="31.8" height="2.2" fill="#ffecb3"/><rect x="461.1" y="95.1" width="7.5" height="10.7" rx="1.0" fill="#ffecb3"/><rect x="462.9" y="96.3" width="4.0" height="7.4" fill="#e5b262"/><path d="M520.2 88.0V110.6Q520.2 112.6 522.2 112.6H531.3V109.0H549.6Q551.8 109.0 551.8 106.8V88.0" fill="#fff" stroke="#666666" stroke-width="1.3"/><path d="M531.3 109.0V111.5Q531.3 112.6 532.4 112.6H545.0Q546.2 112.6 546.2 111.5V109.0M538.6 109.0V112.6" fill="none" stroke="#666666" stroke-width="1.3"/><path d="M520.2 88.9V86.2Q520.2 84.2 522.2 84.2H549.8Q551.8 84.2 551.8 86.2V88.9Z" fill="#512da8"/><line x1="523.2" y1="91.2" x2="549.0" y2="91.2" stroke="#666666" stroke-width="1.7" stroke-linecap="round"/><line x1="523.5" y1="95.2" x2="530.5" y2="95.2" stroke="#b0b0b0" stroke-width="1.7" stroke-linecap="round"/><line x1="532.6" y1="95.2" x2="539.4" y2="95.2" stroke="#b0b0b0" stroke-width="1.7" stroke-linecap="round"/><line x1="541.6" y1="95.2" x2="548.8" y2="95.2" stroke="#512da8" stroke-width="1.7" stroke-linecap="round"/><line x1="523.5" y1="98.9" x2="530.5" y2="98.9" stroke="#b0b0b0" stroke-width="1.7" stroke-linecap="round"/><line x1="532.6" y1="98.9" x2="539.4" y2="98.9" stroke="#b0b0b0" stroke-width="1.7" stroke-linecap="round"/><line x1="541.6" y1="98.9" x2="548.8" y2="98.9" stroke="#512da8" stroke-width="1.7" stroke-linecap="round"/><line x1="523.5" y1="102.3" x2="530.5" y2="102.3" stroke="#b0b0b0" stroke-width="1.7" stroke-linecap="round"/><line x1="532.6" y1="102.3" x2="539.4" y2="102.3" stroke="#b0b0b0" stroke-width="1.7" stroke-linecap="round"/><line x1="541.6" y1="102.3" x2="548.8" y2="102.3" stroke="#512da8" stroke-width="1.7" stroke-linecap="round"/><path d="M603.1 83.8Q603.1 82.3 604.6 82.3H615.5Q616.6 82.3 617.6 83.3L619.8 85.6H633.3Q634.8 85.6 634.8 87.1V88.7H603.1Z" fill="#a0a0a0"/><path d="M603.1 90.4H634.8V110.4Q634.8 112 633.2 112H604.7Q603.1 112 603.1 110.4Z" fill="#a0a0a0"/><path d="M677.8 91.2L690 79.8L702.2 91.2" fill="none" stroke="#a0a0a0" stroke-width="1.8"/><path d="M682 91.5L690 84.4L698 91.5" fill="none" stroke="#a0a0a0" stroke-width="1.4"/><path d="M681.8 90.5V102.2M698.2 90.5V102.2M681.8 92.8H698.2" fill="none" stroke="#a0a0a0" stroke-width="1.4"/><path d="M687 87.5V102.2M693 87.5V102.2" fill="none" stroke="#c8c8c8" stroke-width="1.2"/><path d="M679 104H701" fill="none" stroke="#a0a0a0" stroke-width="1.6"/><rect x="763.9" y="82.1" width="6.1" height="4.6" fill="#e5b262"/><rect x="775.8" y="82.1" width="6.1" height="4.6" fill="#e5b262"/><rect x="771.4" y="89.9" width="3" height="9.2" fill="#e5b262"/><path d="M765 88H769.8V101.4L768.2 102.2V111.8Q768.2 113.6 766.4 113.6H758.7Q756.9 113.6 756.9 111.6Q756.9 101 761 91.5Q762 88 765 88Z" fill="#512da8"/><path d="M781 88H776.2V101.4L777.8 102.2V111.8Q777.8 113.6 779.6 113.6H787.3Q789.1 113.6 789.1 111.6Q789.1 101 785 91.5Q784 88 781 88Z" fill="#512da8"/><text x="827.6" y="94.7" font-family="Liberation Sans" font-weight="700" font-size="15.6" fill="#a0a0a0" stroke="#a0a0a0" stroke-width="1.1" transform="translate(827.6 0) scale(0.78 1) translate(-827.6 0)">AB</text><text x="843.2" y="111.7" font-family="Liberation Sans" font-weight="700" font-size="15.6" fill="#a0a0a0" stroke="#a0a0a0" stroke-width="1.1" transform="translate(843.2 0) scale(0.78 1) translate(-843.2 0)">AC</text><path d="M829.9 97V103Q829.9 106.2 833 106.2H841.5M837.3 101.8L841.6 106.2L837.3 110.6" fill="none" stroke="#a0a0a0" stroke-width="2.3"/><rect x="918.4" y="82.6" width="9" height="10.8" rx="1.2" fill="#fff" stroke="#a0a0a0" stroke-width="1.1"/><path d="M920.3 84.9H925.5M920.3 86.9H925.5M920.3 91.2H925.5" stroke="#a0a0a0" stroke-width="0.9"/><rect x="930.6" y="88.5" width="18.9" height="24.6" rx="2" fill="#fff" stroke="#a0a0a0" stroke-width="1.2"/><path d="M932.6 92.5H947.5M932.6 109.4H947.5" stroke="#a0a0a0" stroke-width="1.4" stroke-linecap="round"/><rect x="932.6" y="95.3" width="14.9" height="9.2" rx="1.2" fill="none" stroke="#b8b8b8" stroke-width="0.9"/><path d="M932.6 98.4H947.5M932.6 101.5H947.5M942 95.3V104.5" stroke="#b8b8b8" stroke-width="0.9"/><rect x="925" y="96" width="9" height="14" fill="#fff" opacity="0"/><path d="M921.2 96V99.5Q921.2 102.6 924.3 102.6H932.3M928.1 98.4L932.3 102.6L928.1 106.8" fill="none" stroke="#a0a0a0" stroke-width="2.4" stroke-linecap="round"/><rect x="1014.3" y="85.2" width="19.6" height="25.2" rx="1.8" fill="#fff" stroke="#666666" stroke-width="1.2"/><path d="M1014.3 88.8V87Q1014.3 85.2 1016.1 85.2H1032.1Q1033.9 85.2 1033.9 87V88.8Z" fill="#512da8"/><rect x="1016.2" y="91.9" width="6.8" height="7.1" rx="1.2" fill="#666666"/><rect x="1024.9" y="91.9" width="6.8" height="7.1" rx="1.2" fill="#666666"/><rect x="1016.2" y="101.4" width="6.8" height="7.1" rx="1.2" fill="#666666"/><rect x="1024.9" y="101.4" width="6.8" height="7.1" rx="1.2" fill="#512da8"/><path d="M1038.8 85.2H1042.8L1045 87.4V93.5Q1045 95 1043.5 95H1038.8Q1037.3 95 1037.3 93.5V86.7Q1037.3 85.2 1038.8 85.2Z" fill="#fff" stroke="#888" stroke-width="0.9"/><path d="M1042.8 85.2V86.4Q1042.8 87.4 1043.8 87.4H1045" fill="none" stroke="#888" stroke-width="0.9"/><path d="M1039 89.3H1043.2M1039 90.9H1043.2M1039 92.5H1043.2" stroke="#512da8" stroke-width="0.9"/><path d="M1036 107.6Q1041 107.8 1041 103V98.2M1037.6 101.2L1041 97.6L1044.4 101.2" fill="none" stroke="#512da8" stroke-width="2" stroke-linecap="round"/><rect x="1126.3" y="82.1" width="24.5" height="31.4" rx="2.6" fill="#fff" stroke="#666666" stroke-width="1.3"/><path d="M1125.65 86.9V84.6Q1125.65 81.45 1128.8 81.45H1148.3Q1151.45 81.45 1151.45 84.6V86.9Z" fill="#4e3a96"/><path d="M1130.0 93.4H1134.9L1137.5 96.0V104.1Q1137.5 105.6 1136.0 105.6H1130.0Q1128.5 105.6 1128.5 104.1V94.9Q1128.5 93.4 1130.0 93.4Z" fill="#fff" stroke="#666666" stroke-width="1.1"/><path d="M1134.9 93.4V95.0Q1134.9 96.0 1135.9 96.0H1137.5" fill="none" stroke="#666666" stroke-width="1.1"/><path d="M1140.9 93.4H1146.0L1148.6 96.0V104.1Q1148.6 105.6 1147.1 105.6H1140.9Q1139.4 105.6 1139.4 104.1V94.9Q1139.4 93.4 1140.9 93.4Z" fill="#fff" stroke="#666666" stroke-width="1.1"/><path d="M1146.0 93.4V95.0Q1146.0 96.0 1147.0 96.0H1148.6" fill="none" stroke="#666666" stroke-width="1.1"/><line x1="1130.6" y1="98.4" x2="1136.0" y2="98.4" stroke="#512da8" stroke-width="1.1" stroke-linecap="round"/><line x1="1130.6" y1="100.5" x2="1136.0" y2="100.5" stroke="#512da8" stroke-width="1.1" stroke-linecap="round"/><line x1="1130.6" y1="102.6" x2="1136.0" y2="102.6" stroke="#512da8" stroke-width="1.1" stroke-linecap="round"/><line x1="1141.5" y1="98.4" x2="1146.9" y2="98.4" stroke="#512da8" stroke-width="1.1" stroke-linecap="round"/><line x1="1141.5" y1="100.5" x2="1146.9" y2="100.5" stroke="#512da8" stroke-width="1.1" stroke-linecap="round"/><line x1="1141.5" y1="102.6" x2="1146.9" y2="102.6" stroke="#512da8" stroke-width="1.1" stroke-linecap="round"/><path d="M1152.2 83.6Q1152.2 82 1153.6 82H1157.5L1158.6 83.2H1164Q1165 83.2 1165 84.2V93.9H1152.2Z" fill="#e5b262"/><path d="M1152.2 83.6Q1152.2 82 1153.6 82H1157.5L1158.6 83.2H1164Q1165 83.2 1165 84.2V85.3H1152.2Z" fill="#a67a2e"/><path d="M1152.2 88.6H1165" stroke="#8a8a8a" stroke-width="1" stroke-dasharray="1 1"/><path d="M1153.5 109.6Q1159.3 110 1159.3 104V98M1154.8 102.2L1159.3 97.6L1163.8 102.2" fill="none" stroke="#4e3a96" stroke-width="2.4" stroke-linecap="round"/><path d="M1273 82.1L1265 83.4Q1267.5 87.5 1271 89.9Q1272.6 86 1273 82.1Z" fill="#512da8"/><path d="M1263.6 84.3Q1259 87 1256 90.6Q1258.5 95.5 1264.4 98.9Q1268.6 95.5 1270.9 91.6Q1266 88.6 1263.6 84.3Z" fill="#e5b262"/><circle cx="1263.4" cy="91.3" r="2.5" fill="#fff"/><path d="M1255.3 92.2Q1253.5 95.2 1251.5 96.4H1246.2L1242.4 100.1L1247 101.6Q1248 106 1251.7 107.7L1253.6 106.7L1254.7 112.4L1258.7 108.2V103.6Q1261.5 101.5 1262.6 99.2Q1257.5 96.5 1255.3 92.2Z" fill="#512da8"/><path d="M1245.6 104.4Q1244.2 108 1244.3 110.9Q1247.6 110.6 1250.4 109.2" fill="none" stroke="#512da8" stroke-width="1.9" stroke-linecap="round"/><path d="M1241.6 110.6Q1241.8 113.2 1243.6 113.6" fill="none" stroke="#512da8" stroke-width="1.5" stroke-linecap="round"/><rect x="1312.4" y="95.9" width="30.2" height="15.3" rx="2.4" fill="#fff" stroke="#a8a8a8" stroke-width="1.2"/><path d="M1316 95.9Q1316 88 1322 87.2Q1325 87 1328 89.5Q1331 91.8 1333.5 91.3Q1338 90.5 1338.6 84.6" fill="none" stroke="#a8a8a8" stroke-width="0.9"/><rect x="1314.6999999999998" y="97.69999999999999" width="1.8" height="1.8" fill="#a8a8a8"/><rect x="1321.1" y="97.69999999999999" width="1.8" height="1.8" fill="#a8a8a8"/><rect x="1324.3" y="97.69999999999999" width="1.8" height="1.8" fill="#a8a8a8"/><rect x="1327.6" y="97.69999999999999" width="1.8" height="1.8" fill="#a8a8a8"/><rect x="1330.6" y="97.69999999999999" width="1.8" height="1.8" fill="#a8a8a8"/><rect x="1338.3999999999999" y="97.69999999999999" width="1.8" height="1.8" fill="#a8a8a8"/><rect x="1314.6999999999998" y="100.8" width="1.8" height="1.8" fill="#a8a8a8"/><rect x="1317.8999999999999" y="100.8" width="1.8" height="1.8" fill="#a8a8a8"/><rect x="1321.1" y="100.8" width="1.8" height="1.8" fill="#a8a8a8"/><rect x="1324.3" y="100.8" width="1.8" height="1.8" fill="#a8a8a8"/><rect x="1338.3999999999999" y="100.8" width="1.8" height="1.8" fill="#a8a8a8"/><rect x="1321.1" y="103.8" width="1.8" height="1.8" fill="#a8a8a8"/><rect x="1324.3" y="103.8" width="1.8" height="1.8" fill="#a8a8a8"/><rect x="1327.6" y="103.8" width="1.8" height="1.8" fill="#a8a8a8"/><rect x="1338.3999999999999" y="103.8" width="1.8" height="1.8" fill="#a8a8a8"/><rect x="1314.6999999999998" y="106.8" width="1.8" height="1.8" fill="#a8a8a8"/><rect x="1317.8999999999999" y="106.8" width="1.8" height="1.8" fill="#a8a8a8"/><rect x="1335.3" y="106.8" width="1.8" height="1.8" fill="#a8a8a8"/><rect x="1338.3999999999999" y="106.8" width="1.8" height="1.8" fill="#a8a8a8"/><rect x="1314.8" y="103.9" width="4.8" height="1.8" fill="#a8a8a8"/><rect x="1321.2" y="106.8" width="11.5" height="1.8" fill="#a8a8a8"/><path d="M1328 101.7H1332.4V105.6" fill="none" stroke="#a8a8a8" stroke-width="1.8"/><path d="M1414 114.3H1401.6Q1399.6 114.3 1399.6 112.3V88.3Q1399.6 86.3 1401.6 86.3H1422.5Q1424.5 86.3 1424.5 88.3V103" fill="none" stroke="#a0a0a0" stroke-width="1.5"/><rect x="1403" y="90.3" width="17.8" height="5.6" rx="1" fill="#a0a0a0"/><rect x="1403" y="99" width="3.7" height="3.6" fill="#a0a0a0"/><rect x="1410" y="99" width="3.7" height="3.6" fill="#a0a0a0"/><rect x="1417" y="99" width="3.7" height="3.6" fill="#a0a0a0"/><rect x="1403" y="105.2" width="3.7" height="3.6" fill="#a0a0a0"/><rect x="1410" y="105.2" width="3.7" height="3.6" fill="#a0a0a0"/><circle cx="1422.2" cy="111" r="6.3" fill="#fff" stroke="#a0a0a0" stroke-width="1.5"/><path d="M1425.6 108.2A3.4 3.4 0 1 0 1425.4 113.4Z" fill="#a0a0a0"/><path d="M1422.6 108.6L1426.6 107.4L1426.4 111Z" fill="#a0a0a0"/><path d="M327.3 77H336.8L332.05 82.3Z" fill="#666666"/><path d="M327.3 100H336.8L332.05 105.3Z" fill="#a0a0a0"/><path d="M685.3 130H695.1L690.2 135Z" fill="#666666"/><path d="M1064.5 119H1074L1069.25 123.8Z" fill="#666666"/><path d="M1194.8 119H1203.9L1199.35 123.8Z" fill="#666666"/><rect x="4.0" y="165.0" width="7.5220125786163425" height="21.09433962264151" rx="1.3081761006289307" fill="#512da8"/><rect x="5.062893081761016" y="167.77987421383648" width="5.39622641509433" height="9.40251572327044" rx="0.6540880503144654" fill="#fff"/><line x1="5.79874213836477" y1="169.49685534591194" x2="9.723270440251572" y2="169.49685534591194" stroke="#3a3a3a" stroke-width="1.0628930817610063" stroke-linecap="round"/><line x1="5.79874213836477" y1="172.35849056603774" x2="9.723270440251572" y2="172.35849056603774" stroke="#3a3a3a" stroke-width="1.0628930817610063" stroke-linecap="round"/><line x1="5.79874213836477" y1="175.30188679245282" x2="9.723270440251572" y2="175.30188679245282" stroke="#3a3a3a" stroke-width="1.0628930817610063" stroke-linecap="round"/><circle cx="7.761006289308194" cy="181.59748427672955" r="2.2893081761006284" fill="#fff"/><rect x="13.238993710691833" y="165.0" width="7.603773584905669" height="21.09433962264151" rx="1.3081761006289307" fill="#e8c02c"/><rect x="14.301886792452848" y="167.77987421383648" width="5.477987421383657" height="9.40251572327044" rx="0.6540880503144654" fill="#fff"/><line x1="15.037735849056602" y1="169.49685534591194" x2="19.04402515723273" y2="169.49685534591194" stroke="#3a3a3a" stroke-width="1.0628930817610063" stroke-linecap="round"/><line x1="15.037735849056602" y1="172.35849056603774" x2="19.04402515723273" y2="172.35849056603774" stroke="#3a3a3a" stroke-width="1.0628930817610063" stroke-linecap="round"/><line x1="15.037735849056602" y1="175.30188679245282" x2="19.04402515723273" y2="175.30188679245282" stroke="#3a3a3a" stroke-width="1.0628930817610063" stroke-linecap="round"/><circle cx="17.04088050314469" cy="181.59748427672955" r="2.2893081761006284" fill="#fff"/><rect x="22.723270440251554" y="165.0" width="7.276729559748455" height="21.09433962264151" rx="1.3081761006289307" fill="#512da8"/><rect x="23.78616352201257" y="167.77987421383648" width="5.150943396226443" height="9.40251572327044" rx="0.6540880503144654" fill="#fff"/><line x1="24.522012578616323" y1="169.49685534591194" x2="28.201257861635238" y2="169.49685534591194" stroke="#3a3a3a" stroke-width="1.0628930817610063" stroke-linecap="round"/><line x1="24.522012578616323" y1="172.35849056603774" x2="28.201257861635238" y2="172.35849056603774" stroke="#3a3a3a" stroke-width="1.0628930817610063" stroke-linecap="round"/><line x1="24.522012578616323" y1="175.30188679245282" x2="28.201257861635238" y2="175.30188679245282" stroke="#3a3a3a" stroke-width="1.0628930817610063" stroke-linecap="round"/><circle cx="26.3616352201258" cy="181.59748427672955" r="2.2893081761006284" fill="#fff"/><rect x="4.0" y="187.0754716981132" width="26.0" height="2.943396226415094" rx="0.8176100628930817" fill="#e5b262"/><path d="M11.60377358490567 198.94339622641508V197.14465408805032Q11.60377358490567 196.32704402515722 12.584905660377357 196.32704402515722H21.66037735849058Q22.641509433962273 196.32704402515722 22.641509433962273 197.14465408805032V198.94339622641508" fill="none" stroke="#666666" stroke-width="1.1446540880503142"/><rect x="4.0" y="200.16981132075472" width="26.0" height="20.767295597484274" rx="1.79874213836478" fill="#512da8"/><rect x="4.0" y="209.65408805031447" width="26.0" height="1.79874213836478" fill="#ffecb3"/><rect x="13.893081761006307" y="206.54716981132074" width="6.132075471698113" height="8.748427672955973" rx="0.8176100628930817" fill="#ffecb3"/><rect x="15.364779874213816" y="207.52830188679243" width="3.2704402515723268" height="6.050314465408805" fill="#e5b262"/><path d="M4.0 233.126582278481V251.72151898734177Q4.0 253.36708860759492 5.6455696202531644 253.36708860759492H13.132911392404989V250.40506329113924H28.189873417721497Q29.999999999999922 250.40506329113924 29.999999999999922 248.59493670886076V233.126582278481" fill="#fff" stroke="#666666" stroke-width="1.0696202531645569"/><path d="M13.132911392404989 250.40506329113924V252.46202531645568Q13.132911392404989 253.36708860759492 14.037974683544247 253.36708860759492H24.4050632911392Q25.392405063291136 253.36708860759492 25.392405063291136 252.46202531645568V250.40506329113924M19.139240506329095 250.40506329113924V253.36708860759492" fill="none" stroke="#666666" stroke-width="1.0696202531645569"/><path d="M4.0 233.86708860759495V231.64556962025316Q4.0 230.0 5.6455696202531644 230.0H28.35443037974676Q29.999999999999922 230.0 29.999999999999922 231.64556962025316V233.86708860759495Z" fill="#512da8"/><line x1="6.468354430379747" y1="235.7594936708861" x2="27.69620253164553" y2="235.7594936708861" stroke="#666666" stroke-width="1.3987341772151898" stroke-linecap="round"/><line x1="6.715189873417684" y1="239.0506329113924" x2="12.47468354430376" y2="239.0506329113924" stroke="#b0b0b0" stroke-width="1.3987341772151898" stroke-linecap="round"/><line x1="14.2025316455696" y1="239.0506329113924" x2="19.797468354430322" y2="239.0506329113924" stroke="#b0b0b0" stroke-width="1.3987341772151898" stroke-linecap="round"/><line x1="21.60759493670884" y1="239.0506329113924" x2="27.531645569620178" y2="239.0506329113924" stroke="#512da8" stroke-width="1.3987341772151898" stroke-linecap="round"/><line x1="6.715189873417684" y1="242.09493670886076" x2="12.47468354430376" y2="242.09493670886076" stroke="#b0b0b0" stroke-width="1.3987341772151898" stroke-linecap="round"/><line x1="14.2025316455696" y1="242.09493670886076" x2="19.797468354430322" y2="242.09493670886076" stroke="#b0b0b0" stroke-width="1.3987341772151898" stroke-linecap="round"/><line x1="21.60759493670884" y1="242.09493670886076" x2="27.531645569620178" y2="242.09493670886076" stroke="#512da8" stroke-width="1.3987341772151898" stroke-linecap="round"/><line x1="6.715189873417684" y1="244.89240506329114" x2="12.47468354430376" y2="244.89240506329114" stroke="#b0b0b0" stroke-width="1.3987341772151898" stroke-linecap="round"/><line x1="14.2025316455696" y1="244.89240506329114" x2="19.797468354430322" y2="244.89240506329114" stroke="#b0b0b0" stroke-width="1.3987341772151898" stroke-linecap="round"/><line x1="21.60759493670884" y1="244.89240506329114" x2="27.531645569620178" y2="244.89240506329114" stroke="#512da8" stroke-width="1.3987341772151898" stroke-linecap="round"/><path d="M51.6 180.4L55.5 184.6L59.4 180.4" fill="none" stroke="#111" stroke-width="1.5"/><path d="M71 214.2L75.2 217.8L71 221.4" fill="none" stroke="#111" stroke-width="1.5"/><path d="M53.2 250.8L57.4 254.5L53.2 258.2" fill="none" stroke="#111" stroke-width="1.5"/><path d="M87.6 174V172.3Q87.6 171.5 88.4 171.5H91.4Q92.2 171.5 92.2 172.3V174" fill="none" stroke="#aaa" stroke-width="0.8"/><rect x="81.1" y="174" width="17.8" height="13.8" rx="1.6" fill="#512da8"/><rect x="81.1" y="180.5" width="17.8" height="1" fill="#c9b8e8"/><ellipse cx="89.9" cy="181" rx="2.1" ry="2.7" fill="#fff"/><ellipse cx="89.9" cy="181" rx="1.4" ry="2" fill="#e5b262"/><rect x="98.9" y="210.1" width="7.5" height="13.6" fill="#e5b262"/><rect x="100.2" y="212.0" width="1.6" height="1.6" fill="#fff" opacity="0.85"/><rect x="103.0" y="212.0" width="1.6" height="1.6" fill="#fff" opacity="0.85"/><rect x="100.2" y="214.8" width="1.6" height="1.6" fill="#fff" opacity="0.85"/><rect x="103.0" y="214.8" width="1.6" height="1.6" fill="#fff" opacity="0.85"/><rect x="100.2" y="217.6" width="1.6" height="1.6" fill="#fff" opacity="0.85"/><rect x="103.0" y="217.6" width="1.6" height="1.6" fill="#fff" opacity="0.85"/><rect x="100.6" y="220.9" width="3.4" height="1.2" fill="#fff" opacity="0.85"/><rect x="106.7" y="206.4" width="10.3" height="17.3" fill="#512da8"/><rect x="108.1" y="208.0" width="1.7" height="1.7" fill="#fff"/><rect x="111.0" y="208.0" width="1.7" height="1.7" fill="#fff"/><rect x="113.89999999999999" y="208.0" width="1.7" height="1.7" fill="#fff"/><rect x="108.1" y="210.9" width="1.7" height="1.7" fill="#fff"/><rect x="111.0" y="210.9" width="1.7" height="1.7" fill="#fff"/><rect x="113.89999999999999" y="210.9" width="1.7" height="1.7" fill="#fff"/><rect x="108.1" y="213.8" width="1.7" height="1.7" fill="#fff"/><rect x="111.0" y="213.8" width="1.7" height="1.7" fill="#fff"/><rect x="113.89999999999999" y="213.8" width="1.7" height="1.7" fill="#fff"/><rect x="108.1" y="216.7" width="1.7" height="1.7" fill="#fff"/><rect x="111.0" y="216.7" width="1.7" height="1.7" fill="#fff"/><rect x="113.89999999999999" y="216.7" width="1.7" height="1.7" fill="#fff"/><rect x="110.2" y="220.2" width="3.4" height="1.8" fill="#fff"/><rect x="82" y="244" width="15.5" height="2.8" rx="0.6" fill="#512da8"/><rect x="87.3" y="242.7" width="5" height="1.6" rx="0.5" fill="#512da8"/><rect x="83.2" y="246.8" width="12.9" height="13.6" fill="#777"/><rect x="85.5" y="248.6" width="1.1" height="10" fill="#fff"/><rect x="88.0" y="248.6" width="1.1" height="10" fill="#fff"/><rect x="90.5" y="248.6" width="1.1" height="10" fill="#fff"/><rect x="93.0" y="248.6" width="1.1" height="10" fill="#fff"/><g transform="rotate(-45 1041 234)"><path d="M1039.5 231.6H1036.6Q1034 231.6 1034 234Q1034 236.4 1036.6 236.4H1039.5M1042.5 231.6H1045.4Q1048 231.6 1048 234Q1048 236.4 1045.4 236.4H1042.5M1038 234H1044" fill="none" stroke="#9a9a9a" stroke-width="1.2"/></g><rect x="1162.8" y="993.4" width="19.6" height="25.2" rx="2.2" fill="#fff" stroke="#b4b4b4" stroke-width="1.1"/><rect x="1164.5" y="995.2" width="16.2" height="4.6" rx="2" fill="none" stroke="#b4b4b4" stroke-width="1.4"/><rect x="1164.8" y="1002.4" width="2.8" height="1.8" fill="#b4b4b4"/><rect x="1168.8999999999999" y="1002.4" width="2.8" height="1.8" fill="#b4b4b4"/><rect x="1173.0" y="1002.4" width="2.8" height="1.8" fill="#b4b4b4"/><rect x="1177.1" y="1002.4" width="2.8" height="1.8" fill="#b4b4b4"/><rect x="1164.8" y="1005.4" width="2.8" height="1.8" fill="#b4b4b4"/><rect x="1168.8999999999999" y="1005.4" width="2.8" height="1.8" fill="#b4b4b4"/><rect x="1173.0" y="1005.4" width="2.8" height="1.8" fill="#b4b4b4"/><rect x="1177.1" y="1005.4" width="2.8" height="1.8" fill="#b4b4b4"/><rect x="1164.8" y="1008.4" width="2.8" height="1.8" fill="#b4b4b4"/><rect x="1168.8999999999999" y="1008.4" width="2.8" height="1.8" fill="#b4b4b4"/><rect x="1173.0" y="1008.4" width="2.8" height="1.8" fill="#b4b4b4"/><rect x="1177.1" y="1008.4" width="2.8" height="1.8" fill="#b4b4b4"/><rect x="1164.8" y="1011.4" width="2.8" height="1.8" fill="#b4b4b4"/><rect x="1168.8999999999999" y="1011.4" width="2.8" height="1.8" fill="#b4b4b4"/><rect x="1173.0" y="1011.4" width="2.8" height="1.8" fill="#b4b4b4"/><rect x="1177.1" y="1011.4" width="2.8" height="1.8" fill="#b4b4b4"/><rect x="1172.8" y="1014.8" width="6.6" height="1.4" fill="#b4b4b4"/><rect x="1571.8" y="1000.6" width="9.2" height="20.3" fill="#fff"/><rect x="1583" y="993.7" width="14.5" height="27.2" fill="#fff"/><rect x="1573.4" y="1003.0" width="2.2" height="2.1" fill="#512da8"/><rect x="1577.2" y="1003.0" width="2.2" height="2.1" fill="#512da8"/><rect x="1573.4" y="1006.7" width="2.2" height="2.1" fill="#512da8"/><rect x="1577.2" y="1006.7" width="2.2" height="2.1" fill="#512da8"/><rect x="1573.4" y="1010.4" width="2.2" height="2.1" fill="#512da8"/><rect x="1577.2" y="1010.4" width="2.2" height="2.1" fill="#512da8"/><rect x="1573.4" y="1014.1" width="2.2" height="2.1" fill="#512da8"/><rect x="1577.2" y="1014.1" width="2.2" height="2.1" fill="#512da8"/><rect x="1584.9" y="996.0" width="2.4" height="2.1" fill="#512da8"/><rect x="1589.0" y="996.0" width="2.4" height="2.1" fill="#512da8"/><rect x="1593.1000000000001" y="996.0" width="2.4" height="2.1" fill="#512da8"/><rect x="1584.9" y="999.7" width="2.4" height="2.1" fill="#512da8"/><rect x="1589.0" y="999.7" width="2.4" height="2.1" fill="#512da8"/><rect x="1593.1000000000001" y="999.7" width="2.4" height="2.1" fill="#512da8"/><rect x="1584.9" y="1003.4" width="2.4" height="2.1" fill="#512da8"/><rect x="1589.0" y="1003.4" width="2.4" height="2.1" fill="#512da8"/><rect x="1593.1000000000001" y="1003.4" width="2.4" height="2.1" fill="#512da8"/><rect x="1584.9" y="1007.1" width="2.4" height="2.1" fill="#512da8"/><rect x="1589.0" y="1007.1" width="2.4" height="2.1" fill="#512da8"/><rect x="1593.1000000000001" y="1007.1" width="2.4" height="2.1" fill="#512da8"/><rect x="1584.9" y="1010.8" width="2.4" height="2.1" fill="#512da8"/><rect x="1589.0" y="1010.8" width="2.4" height="2.1" fill="#512da8"/><rect x="1593.1000000000001" y="1010.8" width="2.4" height="2.1" fill="#512da8"/><rect x="1574.8" y="1017.5" width="3.6" height="1.8" fill="#512da8"/><rect x="1588.3" y="1016.5" width="3.6" height="2.4" fill="#512da8"/></svg>
</body></html>
